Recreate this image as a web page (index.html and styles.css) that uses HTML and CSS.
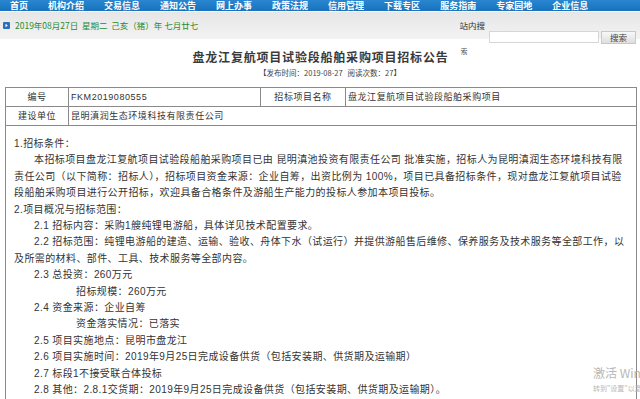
FILE: index.html
```html
<!DOCTYPE html>
<html lang="zh-CN">
<head>
<meta charset="utf-8">
<title>盘龙江复航项目试验段船舶采购项目招标公告</title>
<link rel="stylesheet" href="styles.css">
</head>
<body>
<div class="nav">
  <a class="nav-item first">首页</a>
  <a class="nav-item">机构介绍</a>
  <a class="nav-item">交易信息</a>
  <a class="nav-item">通知公告</a>
  <a class="nav-item">网上办事</a>
  <a class="nav-item">政策法规</a>
  <a class="nav-item">信用管理</a>
  <a class="nav-item">下载专区</a>
  <a class="nav-item">服务指南</a>
  <a class="nav-item">专家园地</a>
  <a class="nav-item">企业信息</a>
</div>
<div class="topbar">
  <div class="date">
    <span class="date-icon"><svg width="7" height="7" viewBox="0 0 7 7"><rect width="7" height="7" rx="1" fill="#2a6fb8"/><path d="M2.5 1.8 L4.8 3.5 L2.5 5.2 Z" fill="#fff"/></svg></span>
    <span>2019年08月27日&nbsp;&nbsp;星期二&nbsp;&nbsp;己亥（猪）年 七月廿七</span>
  </div>
  <div class="search">
    <span class="search-label">站内搜</span>
    <span class="search-input"></span>
    <span class="search-btn">搜索</span>
  </div>
</div>
<div class="heading">
  <h1 class="title">盘龙江复航项目试验段船舶采购项目招标公告<sup class="suo">索</sup></h1>
  <div class="meta">【发布时间：2019-08-27&nbsp;&nbsp;&nbsp;阅读次数：27】</div>
</div>
<table class="info">
  <colgroup>
    <col class="c1"><col class="c2"><col class="c3"><col class="c4">
  </colgroup>
  <tr>
    <td class="label">编号</td>
    <td>FKM2019080555</td>
    <td class="label">招标项目名称</td>
    <td>盘龙江复航项目试验段船舶采购项目</td>
  </tr>
  <tr>
    <td class="label">建设单位</td>
    <td colspan="3">昆明滇润生态环境科技有限责任公司</td>
  </tr>
  <tr>
    <td colspan="4" class="content">
      <p>1.招标条件：</p>
      <p class="ind2">本招标项目盘龙江复航项目试验段船舶采购项目已由 昆明滇池投资有限责任公司 批准实施，招标人为昆明滇润生态环境科技有限责任公司（以下简称：招标人），招标项目资金来源：企业自筹，出资比例为 100%，项目已具备招标条件，现对盘龙江复航项目试验段船舶采购项目进行公开招标，欢迎具备合格条件及游船生产能力的投标人参加本项目投标。</p>
      <p>2.项目概况与招标范围：</p>
      <p class="ind2">2.1 招标内容：采购1艘纯锂电游船，具体详见技术配置要求。</p>
      <p class="ind2">2.2 招标范围：纯锂电游船的建造、运输、验收、舟体下水（试运行）并提供游船售后维修、保养服务及技术服务等全部工作，以及所需的材料、部件、工具、技术服务等全部内容。</p>
      <p class="ind2">2.3 总投资：260万元</p>
      <p class="ind6">招标规模：260万元</p>
      <p class="ind2">2.4 资金来源：企业自筹</p>
      <p class="ind6">资金落实情况：已落实</p>
      <p class="ind2">2.5 项目实施地点：昆明市盘龙江</p>
      <p class="ind2">2.6 项目实施时间：2019年9月25日完成设备供货（包括安装期、供货期及运输期）</p>
      <p class="ind2">2.7 标段1不接受联合体投标</p>
      <p class="ind2">2.8 其他：2.8.1交货期：2019年9月25日完成设备供货（包括安装期、供货期及运输期）。</p>
      <p class="ind2">2.8.2交货地点：昆明市盘龙江</p>
    </td>
  </tr>
</table>
<div class="watermark">
  <div class="wm1">激活 Windows</div>
  <div class="wm2">转到"设置"以激活 Windows。</div>
</div>
</body>
</html>
```
FILE: styles.css
```css
html, body {
  margin: 0;
  padding: 0;
  background: #fff;
  overflow: hidden;
}
body {
  width: 640px;
  height: 399px;
  font-family: "Liberation Sans", "Noto Sans CJK SC", sans-serif;
  color: #333;
  position: relative;
}
.nav {
  height: 11px;
  background: linear-gradient(#2a86d0, #1872bd);
  display: flex;
  align-items: center;
  gap: 20px;
  padding-left: 10px;
  overflow: hidden;
}
.nav-item {
  color: #fff;
  font-weight: bold;
  font-size: 9px;
  line-height: 10px;
  white-space: nowrap;
  font-family: "Noto Sans CJK SC", sans-serif;
}
.topbar {
  height: 27px;
  border-top: 1px solid #fff;
  background: linear-gradient(#e6e6e6, #f3f3f3);
  display: flex;
  justify-content: space-between;
  align-items: flex-start;
}
.date {
  display: flex;
  align-items: center;
  gap: 5px;
  padding-left: 3px;
  margin-top: 8px;
  font-size: 8.5px;
  color: #2d8a2d;
  font-family: "Noto Sans CJK SC", sans-serif;
  line-height: 10px;
}
.date-icon {
  display: flex;
}
.search {
  display: flex;
  align-items: flex-start;
  padding-right: 4px;
  font-family: "Noto Sans CJK SC", sans-serif;
}
.search-label {
  font-size: 8.5px;
  color: #333;
  margin-top: 8px;
  line-height: 10px;
  margin-right: 4px;
}
.search-input {
  width: 108px;
  height: 10px;
  background: #fff;
  border: 1px solid #d6d6d6;
  margin-top: 19px;
}
.search-btn {
  width: 33px;
  height: 11px;
  margin-top: 19px;
  margin-left: 2px;
  border: 1px solid #c8c8c8;
  background: linear-gradient(#f8f8f8, #dedede);
  font-size: 8.5px;
  line-height: 11px;
  text-align: center;
  color: #444;
}
.heading {
  text-align: center;
  padding-top: 3px;
}
.title {
  margin: 0;
  padding-left: 20px;
  font-size: 12px;
  letter-spacing: 0.8px;
  line-height: 18px;
  font-weight: bold;
  color: #3a3a3a;
  font-family: "Noto Sans CJK SC", sans-serif;
}
.suo {
  font-size: 7px;
  font-weight: normal;
  vertical-align: 8px;
  margin-left: 12px;
  letter-spacing: 0;
  color: #555;
}
.meta {
  margin-top: 2px;
  font-size: 7.5px;
  line-height: 10px;
  color: #444;
  padding-left: 20px;
  font-family: "Noto Sans CJK SC", sans-serif;
}
.info {
  margin: 9px 0 0 5px;
  width: 631px;
  border-collapse: collapse;
  table-layout: fixed;
  font-family: "Liberation Sans", "Noto Sans CJK SC", sans-serif;
}
.c1 { width: 63px; }
.c2 { width: 192px; }
.c3 { width: 85px; }
.c4 { width: 291px; }
.info td {
  border: 1px solid #8a8a8a;
  height: 18px;
  padding: 0 2px;
  font-size: 9px;
  letter-spacing: 0.55px;
  line-height: 12px;
  color: #333;
  white-space: nowrap;
  overflow: hidden;
}
.info td.label {
  text-align: center;
}
.info td.content {
  height: auto;
  padding: 10px 10px 0 8px;
  white-space: normal;
  vertical-align: top;
  font-size: 10px;
  letter-spacing: 0.4px;
  line-height: 16.4px;
}
.content p {
  margin: 0;
}
.content .ind2 {
  text-indent: 20px;
}
.content .ind6 {
  text-indent: 62px;
}
.watermark {
  position: absolute;
  left: 593px;
  top: 365px;
  color: #b8b8b8;
  white-space: nowrap;
  font-family: "Noto Sans CJK SC", sans-serif;
}
.wm1 {
  font-size: 12px;
  line-height: 16px;
}
.wm2 {
  font-size: 7px;
  line-height: 10px;
  margin-top: 2px;
}
```
